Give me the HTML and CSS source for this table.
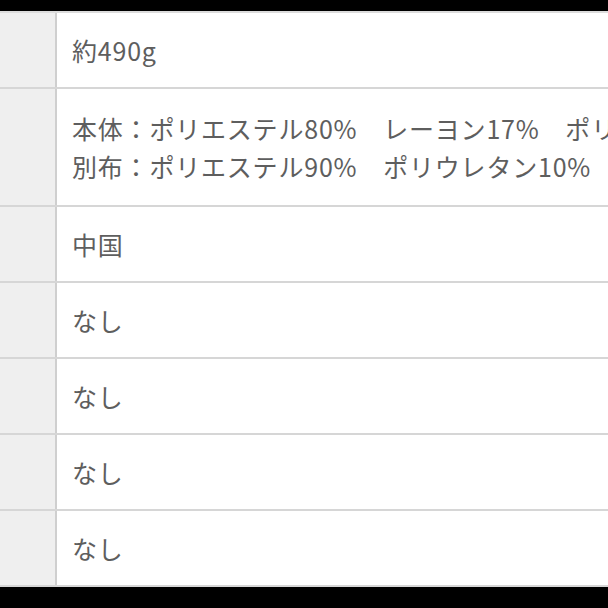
FILE: index.html
```html
<!DOCTYPE html>
<html lang="ja">
<head>
<meta charset="utf-8">
<link rel="stylesheet" href="styles.css">
</head>
<body>
<div class="spec">
  <div class="row"><div class="label"></div><div class="value">約490g</div></div>
  <div class="row"><div class="label"></div><div class="value">本体：ポリエステル80%　レーヨン17%　ポリウレタン3%<br>別布：ポリエステル90%　ポリウレタン10%</div></div>
  <div class="row"><div class="label"></div><div class="value">中国</div></div>
  <div class="row"><div class="label"></div><div class="value">なし</div></div>
  <div class="row"><div class="label"></div><div class="value">なし</div></div>
  <div class="row"><div class="label"></div><div class="value">なし</div></div>
  <div class="row"><div class="label"></div><div class="value">なし</div></div>
</div>
</body>
</html>
```
FILE: styles.css
```css
html, body {
  margin: 0;
  padding: 0;
  background: #000;
  height: 608px;
  overflow: hidden;
}
body {
  padding-top: 11px;
  box-sizing: border-box;
}
.spec {
  background: #fff;
  border-top: 2px solid #dcdcdc;
}
.row {
  display: flex;
  border-bottom: 2px solid #d6d6d6;
}
.label {
  width: 55px;
  flex: none;
  background: #efefef;
  border-right: 2px solid #cfcfcf;
}
.value {
  flex: 1;
  padding: 18px 0 18px 15px;
  font-family: "Noto Sans CJK JP", "Noto Sans", sans-serif;
  font-size: 25px;
  line-height: 38px;
  letter-spacing: 0.8px;
  color: #5e5e5e;
  white-space: nowrap;
  overflow: hidden;
}
.row:nth-child(2) .value {
  padding-top: 20px;
  padding-bottom: 20px;
}
```
